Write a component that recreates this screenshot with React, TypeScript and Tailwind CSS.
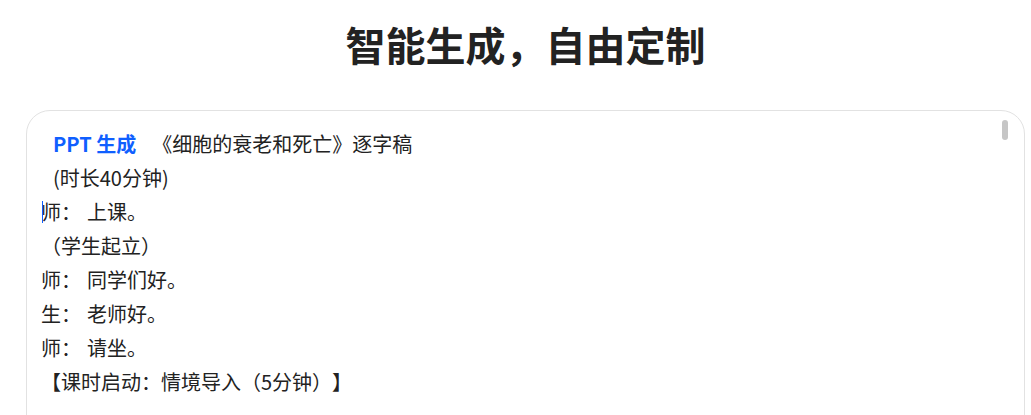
import React from "react";

const lines = [
  { who: "", text: "(时长40分钟)", indent: true },
  { who: "师：", text: "上课。", caret: true },
  { who: "", text: "（学生起立）" },
  { who: "师：", text: "同学们好。" },
  { who: "生：", text: "老师好。" },
  { who: "师：", text: "请坐。" },
  { who: "", text: "【课时启动：情境导入（5分钟）】" },
];

export default function App() {
  return (
    <div
      className="h-screen bg-white text-[#222] overflow-hidden [text-spacing-trim:space-all]"
      style={{ fontFamily: '"Noto Sans CJK SC", "Noto Sans", sans-serif' }}
    >
      {/* Heading */}
      <h1 className="pt-[19px] pl-[20px] h-[50px] box-content leading-[50px] text-center text-[40px] font-bold text-[#222]">
        智能生成，自由定制
      </h1>

      {/* Editor card */}
      <div className="relative mt-[41px] ml-[26px] mr-[6px] h-[400px] rounded-[24px] border border-[#e2e2e2] bg-white pt-[16px] pl-[14px] pr-6">
        {/* scrollbar thumb */}
        <div className="absolute right-[16px] top-[9px] w-[6px] h-[20px] rounded-full bg-[#c6c6c6]" />

        <div className="text-[20px] leading-[34px]">
          <div className="pl-3">
            <span className="font-bold text-[#0f5fff]">PPT 生成</span>
            <span className="ml-[16px]">《细胞的衰老和死亡》逐字稿</span>
          </div>
          {lines.map((l, i) => (
            <div key={i} className={`relative ${l.indent ? "pl-3" : ""}`}>
              {l.caret && (
                <span className="absolute left-[1px] top-[6px] w-px h-[22px] bg-[#0f5fff]" />
              )}
              {l.who && <span>{l.who}</span>}
              {l.who && <span className="inline-block w-[6px]" />}
              <span>{l.text}</span>
            </div>
          ))}
        </div>
      </div>
    </div>
  );
}
